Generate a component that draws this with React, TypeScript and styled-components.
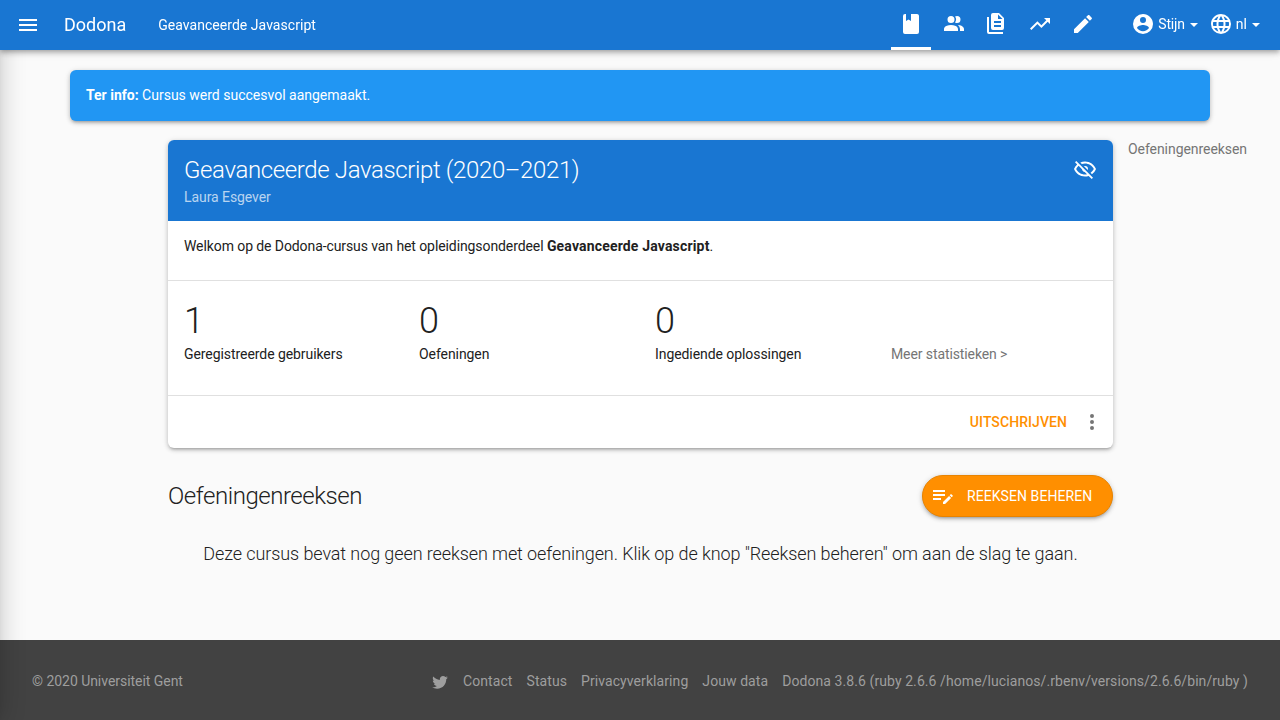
import React from "react";
import styled, { createGlobalStyle } from "styled-components";

const Global = createGlobalStyle`
  * { box-sizing: border-box; }
  html, body { margin: 0; height: 100%; overflow: hidden; }
  body { font: 400 14px/20px Roboto, sans-serif; color: #212121; background: #fafafa; }
  a { color: inherit; text-decoration: none; }
`;

const paths = {
  menu: "M3,6H21V8H3V6M3,11H21V13H3V11M3,16H21V18H3V16Z",
  book: "M18,22A2,2 0 0,0 20,20V4C20,2.89 19.1,2 18,2H12V9L9.5,7.5L7,9V2H6A2,2 0 0,0 4,4V20A2,2 0 0,0 6,22H18Z",
  users: "M16 17V19H2V17S2 13 9 13 16 17 16 17M12.5 7.5A3.5 3.5 0 1 0 9 11A3.5 3.5 0 0 0 12.5 7.5M15.94 13A5.32 5.32 0 0 1 18 17V19H22V17S22 13.37 15.94 13M15 4A3.39 3.39 0 0 0 13.07 4.59A5 5 0 0 1 13.07 10.41A3.39 3.39 0 0 0 15 11A3.5 3.5 0 0 0 15 4Z",
  files: "M4 5H2V20A2 2 0 0 0 4 22H18V20H4V5M14 1H8A2 2 0 0 0 6 3V16A2 2 0 0 0 8 18H17A2 2 0 0 0 19 16V6L14 1M16 15H9V13H16V15M16 11H9V9H16V11M13 7V2.5L17.5 7H13Z",
  trend: "M16,6L18.29,8.29L13.41,13.17L9.41,9.17L2,16.59L3.41,18L9.41,12L13.41,16L19.71,9.71L22,12V6H16Z",
  pencil: "M20.71,7.04C21.1,6.65 21.1,6 20.71,5.63L18.37,3.29C18,2.9 17.35,2.9 16.96,3.29L15.12,5.12L18.87,8.87M3,17.25V21H6.75L17.81,9.93L14.06,6.18L3,17.25Z",
  account: "M12,19.2C9.5,19.2 7.29,17.92 6,16C6.03,14 10,12.9 12,12.9C14,12.9 17.97,14 18,16C16.71,17.92 14.5,19.2 12,19.2M12,5A3,3 0 0,1 15,8A3,3 0 0,1 12,11A3,3 0 0,1 9,8A3,3 0 0,1 12,5M12,2A10,10 0 0,0 2,12A10,10 0 0,0 12,22A10,10 0 0,0 22,12C22,6.47 17.5,2 12,2Z",
  web: "M16.36,14C16.44,13.34 16.5,12.68 16.5,12C16.5,11.32 16.44,10.66 16.36,10H19.74C19.9,10.64 20,11.31 20,12C20,12.69 19.9,13.36 19.74,14M14.59,19.56C15.19,18.45 15.65,17.25 15.97,16H18.92C17.96,17.65 16.43,18.93 14.59,19.56M14.34,14H9.66C9.56,13.34 9.5,12.68 9.5,12C9.5,11.32 9.56,10.65 9.66,10H14.34C14.43,10.65 14.5,11.32 14.5,12C14.5,12.68 14.43,13.34 14.34,14M12,19.96C11.17,18.76 10.5,17.43 10.09,16H13.91C13.5,17.43 12.83,18.76 12,19.96M8,8H5.08C6.03,6.34 7.57,5.06 9.4,4.44C8.8,5.55 8.35,6.75 8,8M5.08,16H8C8.35,17.25 8.8,18.45 9.4,19.56C7.57,18.93 6.03,17.65 5.08,16M4.26,14C4.1,13.36 4,12.69 4,12C4,11.31 4.1,10.64 4.26,10H7.64C7.56,10.66 7.5,11.32 7.5,12C7.5,12.68 7.56,13.34 7.64,14M12,4.03C12.83,5.23 13.5,6.57 13.91,8H10.09C10.5,6.57 11.17,5.23 12,4.03M18.92,8H15.97C15.65,6.75 15.19,5.55 14.59,4.44C16.43,5.07 17.96,6.34 18.92,8M12,2C6.47,2 2,6.5 2,12A10,10 0 0,0 12,22A10,10 0 0,0 22,12A10,10 0 0,0 12,2Z",
  eyeOff: "M2,5.27L3.28,4L20,20.72L18.73,22L15.65,18.92C14.5,19.3 13.28,19.5 12,19.5C7,19.5 2.73,16.39 1,12C1.69,10.24 2.79,8.69 4.19,7.46L2,5.27M12,9A3,3 0 0,1 15,12C15,12.35 14.94,12.69 14.83,13L11,9.17C11.31,9.06 11.65,9 12,9M12,4.5C17,4.5 21.27,7.61 23,12C22.18,14.08 20.79,15.88 19,17.19L17.58,15.76C18.94,14.82 20.06,13.54 20.82,12C19.17,8.64 15.76,6.5 12,6.5C10.91,6.5 9.84,6.68 8.84,7L7.3,5.47C8.74,4.85 10.33,4.5 12,4.5M3.18,12C4.83,15.36 8.24,17.5 12,17.5C12.69,17.5 13.37,17.43 14,17.29L11.72,15C10.29,14.85 9.15,13.71 9,12.28L5.6,8.87C4.61,9.72 3.78,10.78 3.18,12Z",
  dots: "M12,16A2,2 0 0,1 14,18A2,2 0 0,1 12,20A2,2 0 0,1 10,18A2,2 0 0,1 12,16M12,10A2,2 0 0,1 14,12A2,2 0 0,1 12,14A2,2 0 0,1 10,12A2,2 0 0,1 12,10M12,4A2,2 0 0,1 14,6A2,2 0 0,1 12,8A2,2 0 0,1 10,6A2,2 0 0,1 12,4Z",
  listEdit: "M2,6V8H14V6H2M2,10V12H14V10H2M20.04,10.13C19.9,10.13 19.76,10.19 19.65,10.3L18.65,11.3L20.7,13.35L21.7,12.35C21.92,12.14 21.92,11.79 21.7,11.58L20.42,10.3C20.31,10.19 20.18,10.13 20.04,10.13M18.07,11.88L12,17.94V20H14.06L20.12,13.93L18.07,11.88M2,14V16H10V14H2Z",
  twitter: "M22.46,6C21.69,6.35 20.86,6.58 20,6.69C20.88,6.16 21.56,5.32 21.88,4.31C21.05,4.81 20.13,5.16 19.16,5.36C18.37,4.5 17.26,4 16,4C13.65,4 11.73,5.92 11.73,8.29C11.73,8.63 11.77,8.96 11.84,9.27C8.28,9.09 5.11,7.38 3,4.79C2.63,5.42 2.42,6.16 2.42,6.94C2.42,8.43 3.17,9.75 4.33,10.5C3.62,10.5 2.96,10.3 2.38,10C2.38,12.11 3.86,13.85 5.82,14.24C5.46,14.34 5.08,14.39 4.69,14.39C4.42,14.39 4.15,14.36 3.89,14.31C4.43,16 6,17.26 7.89,17.29C6.43,18.45 4.58,19.13 2.56,19.13C2.22,19.13 1.88,19.11 1.54,19.07C3.44,20.29 5.7,21 8.12,21C16,21 20.33,14.46 20.33,8.79C20.33,8.6 20.33,8.42 20.32,8.23C21.16,7.63 21.88,6.87 22.46,6Z",
};

const Svg = styled.svg`
  display: block;
  flex: none;
  fill: currentColor;
`;

function Icon({ name, size = 24 }: { name: keyof typeof paths; size?: number }) {
  return (
    <Svg width={size} height={size} viewBox="0 0 24 24" aria-hidden="true">
      <path d={paths[name]} />
    </Svg>
  );
}

const Page = styled.div`
  display: flex;
  flex-direction: column;
  height: 720px;
`;

const DrawerShadow = styled.div`
  position: fixed;
  z-index: 2;
  top: 0;
  bottom: 0;
  left: -280px;
  width: 280px;
  box-shadow: 0 8px 10px -5px rgba(0, 0, 0, 0.16), 0 0 24px 1px rgba(0, 0, 0, 0.2);
`;

const Navbar = styled.header`
  position: relative;
  z-index: 3;
  flex: none;
  display: flex;
  height: 50px;
  padding: 0 20px 0 16px;
  color: #fff;
  background: #1976d2;
  box-shadow: 0 2px 4px -1px rgba(0, 0, 0, 0.2), 0 4px 5px 0 rgba(0, 0, 0, 0.14), 0 1px 10px 0 rgba(0, 0, 0, 0.12);
`;

const MenuButton = styled.a`
  margin: 13px 24px 0 0;
`;

const Brand = styled.a`
  margin-right: 32px;
  font-size: 18px;
  line-height: 50px;
`;

const Crumb = styled.a`
  line-height: 50px;
  letter-spacing: 0.04px;
`;

const Tabs = styled.nav`
  display: flex;
  gap: 3px;
  margin-left: auto;
`;

const Tab = styled.a<{ $active?: boolean }>`
  display: flex;
  justify-content: center;
  width: 40px;
  padding-top: 12px;
  border-bottom: 3px solid ${(p) => (p.$active ? "#fff" : "transparent")};
`;

const UserMenu = styled.div`
  display: flex;
  gap: 11px;
  margin-left: 28px;
`;

const Dropdown = styled.a<{ $tracking?: string }>`
  display: flex;
  align-items: center;
  gap: 3px;
  height: 48px;
  letter-spacing: ${(p) => p.$tracking ?? "normal"};
`;

const Caret = styled.span`
  margin: 2px 0 0 2px;
  border: 4px solid transparent;
  border-top-color: currentColor;
  border-bottom: 0;
`;

const cardShadow = "0 2px 4px 0 rgba(0,0,0,.16), 0 3px 3px -2px rgba(0,0,0,.2), 0 1px 6px 0 rgba(0,0,0,.12)";

const Notice = styled.div`
  flex: none;
  width: 1140px;
  height: 51px;
  margin: 20px auto 19px;
  padding: 15px 16px;
  border-radius: 6px;
  color: #fff;
  background: #2196f3;
  box-shadow: ${cardShadow};
`;

const Columns = styled.div`
  flex: 1;
  display: flex;
  padding-left: 168px;
`;

const Main = styled.main`
  width: 945px;
`;

const Aside = styled.aside`
  padding-left: 15px;
  line-height: 18px;
  letter-spacing: -0.06px;
  color: #757575;
`;

const Card = styled.section`
  height: 308px;
  border-radius: 6px;
  overflow: hidden;
  background: #fff;
  box-shadow: ${cardShadow};
`;

const CardHeader = styled.header`
  display: flex;
  justify-content: space-between;
  height: 81px;
  padding: 16px 16px 0;
  color: #fff;
  background: #1976d2;
`;

const CardTitle = styled.h1`
  margin: 0;
  font-size: 24px;
  font-weight: 300;
  line-height: 28px;
  letter-spacing: -0.37px;
`;

const Teacher = styled.div`
  margin-top: 3px;
  letter-spacing: -0.07px;
  color: rgba(255, 255, 255, 0.7);
`;

const HiddenMark = styled.span`
  padding-top: 1px;
`;

const Description = styled.div`
  height: 60px;
  padding: 15px 16px;
  border-bottom: 1px solid #e0e0e0;
  letter-spacing: -0.09px;

  b {
    letter-spacing: 0.17px;
  }
`;

const Stats = styled.div`
  display: grid;
  grid-template-columns: 235px 236px 236px auto;
  height: 115px;
  padding: 20px 0 0 16px;
  border-bottom: 1px solid #e0e0e0;
  letter-spacing: -0.07px;
`;

const StatValue = styled.div`
  height: 43px;
  font-size: 36px;
  font-weight: 300;
  line-height: 40px;
`;

const MoreLink = styled.a`
  padding-top: 43px;
  letter-spacing: -0.1px;
  color: #757575;
`;

const Actions = styled.div`
  display: flex;
  justify-content: flex-end;
  align-items: center;
  gap: 13px;
  height: 52px;
  padding-right: 9px;
  color: #757575;
`;

const TextButton = styled.a`
  font-weight: 500;
  letter-spacing: 0.07px;
  color: #ff8f00;
`;

const SectionBar = styled.div`
  display: flex;
  justify-content: space-between;
  align-items: center;
  height: 42px;
  margin-top: 27px;
`;

const SectionTitle = styled.h2`
  margin: 0;
  font-size: 24px;
  font-weight: 300;
  letter-spacing: -0.45px;
`;

const PillButton = styled.a`
  display: flex;
  align-items: center;
  gap: 12px;
  width: 191px;
  height: 42px;
  padding-left: 8px;
  border: 1px solid #e88300;
  border-radius: 21px;
  letter-spacing: 0.07px;
  color: #fff;
  background: #ff8f00;
  box-shadow: ${cardShadow};
`;

const EmptyText = styled.p`
  margin: 24px 0 0;
  font-size: 18px;
  font-weight: 300;
  line-height: 26px;
  letter-spacing: -0.095px;
  text-align: center;
`;

const Footer = styled.footer`
  flex: none;
  display: flex;
  justify-content: space-between;
  height: 80px;
  padding: 31px 32px 0;
  letter-spacing: -0.04px;
  color: #9e9e9e;
  background: #424242;
`;

const FooterLinks = styled.div`
  display: flex;
  gap: 14px;
  letter-spacing: 0.08px;
`;

const TwitterLink = styled.a`
  padding-top: 2px;
`;

export default function App() {
  return (
    <Page>
      <Global />
      <DrawerShadow />
      <Navbar>
        <MenuButton><Icon name="menu" /></MenuButton>
        <Brand>Dodona</Brand>
        <Crumb>Geavanceerde Javascript</Crumb>
        <Tabs>
          <Tab $active><Icon name="book" /></Tab>
          <Tab><Icon name="users" /></Tab>
          <Tab><Icon name="files" /></Tab>
          <Tab><Icon name="trend" /></Tab>
          <Tab><Icon name="pencil" /></Tab>
        </Tabs>
        <UserMenu>
          <Dropdown $tracking="-0.15px"><Icon name="account" />Stijn <Caret /></Dropdown>
          <Dropdown><Icon name="web" />nl <Caret /></Dropdown>
        </UserMenu>
      </Navbar>
      <Notice><b>Ter info:</b> Cursus werd succesvol aangemaakt.</Notice>
      <Columns>
        <Main>
          <Card>
            <CardHeader>
              <div>
                <CardTitle>Geavanceerde Javascript (2020–2021)</CardTitle>
                <Teacher>Laura Esgever</Teacher>
              </div>
              <HiddenMark><Icon name="eyeOff" /></HiddenMark>
            </CardHeader>
            <Description>
              Welkom op de Dodona-cursus van het opleidingsonderdeel <b>Geavanceerde Javascript</b>.
            </Description>
            <Stats>
              <div><StatValue>1</StatValue>Geregistreerde gebruikers</div>
              <div><StatValue>0</StatValue>Oefeningen</div>
              <div><StatValue>0</StatValue>Ingediende oplossingen</div>
              <MoreLink>Meer statistieken &gt;</MoreLink>
            </Stats>
            <Actions>
              <TextButton>UITSCHRIJVEN</TextButton>
              <Icon name="dots" />
            </Actions>
          </Card>
          <SectionBar>
            <SectionTitle>Oefeningenreeksen</SectionTitle>
            <PillButton><Icon name="listEdit" />REEKSEN BEHEREN</PillButton>
          </SectionBar>
          <EmptyText>Deze cursus bevat nog geen reeksen met oefeningen. Klik op de knop "Reeksen beheren" om aan de slag te gaan.</EmptyText>
        </Main>
        <Aside>Oefeningenreeksen</Aside>
      </Columns>
      <Footer>
        <span>© 2020 Universiteit Gent</span>
        <FooterLinks>
          <TwitterLink><Icon name="twitter" size={18} /></TwitterLink>
          <a>Contact</a>
          <a>Status</a>
          <a>Privacyverklaring</a>
          <a>Jouw data</a>
          <a>Dodona 3.8.6 (ruby 2.6.6 /home/lucianos/.rbenv/versions/2.6.6/bin/ruby )</a>
        </FooterLinks>
      </Footer>
    </Page>
  );
}
